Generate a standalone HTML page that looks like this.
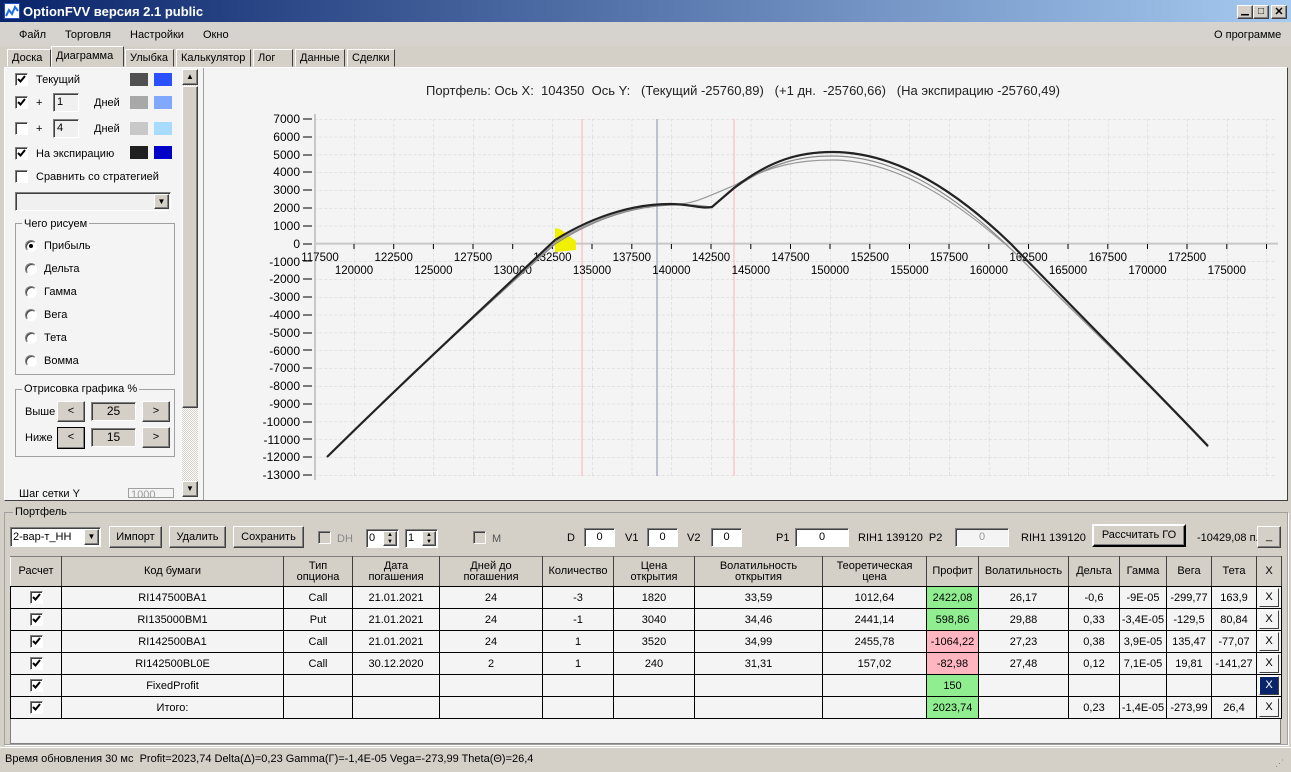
<!DOCTYPE html>
<html><head><meta charset="utf-8"><style>
*{margin:0;padding:0;box-sizing:border-box}
body{width:1291px;height:772px;overflow:hidden;background:#d4d0c8;font-family:"Liberation Sans",sans-serif;font-size:11px;color:#000;position:relative}
.a{position:absolute}
.btn{position:absolute;background:#d4d0c8;border:1px solid;border-color:#fff #404040 #404040 #fff;box-shadow:inset -1px -1px #808080;text-align:center;font-size:11px}
.inp{position:absolute;background:#fff;border:1px solid;border-color:#808080 #fff #fff #808080;box-shadow:inset 1px 1px #404040;text-align:center;font-size:11px}
.cb{position:absolute;width:13px;height:13px;background:#fff;border:1px solid;border-color:#808080 #fff #fff #808080;box-shadow:inset 1px 1px #404040}
.cb svg{position:absolute;left:1px;top:1px}
.rb{position:absolute;width:12px;height:12px;border-radius:50%;background:#fff;border:1px solid;border-color:#808080 #fff #fff #808080;box-shadow:inset 1px 1px #404040}
.rb.on::after{content:"";position:absolute;left:3px;top:3px;width:4px;height:4px;border-radius:50%;background:#000}
.tab{position:absolute;top:49px;height:18px;background:#d4d0c8;border:1px solid;border-color:#fff #404040 transparent #fff;padding:2px 4px;font-size:11px}
table{border-collapse:collapse;position:absolute;left:10px;top:556px;table-layout:fixed;font-size:11px}
td{border:1px solid #000;text-align:center;height:22px;background:#f4f4f4;padding:0;overflow:hidden;white-space:nowrap}
tr.h td{background:#d4d0c8;height:30px;line-height:11px;border-color:#808080 #404040 #000 #fff}
.g{background:#90ee90!important}.r{background:#ffb6c1!important}
.x{display:inline-block;width:20px;height:19px;border:1px solid;border-color:#fff #404040 #404040 #fff;background:#f4f4f4;line-height:17px}
td .cb{position:relative;display:inline-block;vertical-align:middle}
</style></head><body>
<!-- title bar -->
<div class="a" style="left:0;top:0;width:1291px;height:22px;background:linear-gradient(90deg,#0a246a,#a6caf0)"></div>
<div class="a" style="left:4px;top:3px;width:16px;height:16px;background:#fff;border:1px solid #2050c0"><svg width="14" height="14"><path d="M1 12 L4 6 L7 10 L10 3 L13 7" stroke="#1e6ee8" stroke-width="2" fill="none"/></svg></div>
<div class="a" style="left:23px;top:4px;color:#fff;font-weight:bold;font-size:13px">OptionFVV версия 2.1 public</div>
<div class="btn" style="left:1237px;top:5px;width:16px;height:14px;font-size:10px;line-height:10px">▁</div>
<div class="btn" style="left:1253px;top:5px;width:16px;height:14px;font-size:10px;line-height:12px">□</div>
<div class="btn" style="left:1271px;top:5px;width:16px;height:14px;font-size:11px;line-height:12px;font-weight:bold">✕</div>
<!-- menu -->
<div class="a" style="left:0;top:22px;width:1291px;height:24px;background:#d6d3ce"></div>
<div class="a" style="left:19px;top:29px;font-size:11px">Файл</div>
<div class="a" style="left:65px;top:29px">Торговля</div>
<div class="a" style="left:130px;top:29px">Настройки</div>
<div class="a" style="left:203px;top:29px">Окно</div>
<div class="a" style="left:1214px;top:29px">О программе</div>
<!-- tabs -->
<div class="tab" style="left:7px;width:44px">Доска</div>
<div class="tab" style="left:51px;top:46px;height:21px;width:73px;padding-top:3px">Диаграмма</div>
<div class="tab" style="left:125px;width:49px">Улыбка</div>
<div class="tab" style="left:176px;width:75px">Калькулятор</div>
<div class="tab" style="left:253px;width:40px">Лог</div>
<div class="tab" style="left:295px;width:50px">Данные</div>
<div class="tab" style="left:347px;width:48px">Сделки</div>
<!-- main area -->
<div class="a" style="left:4px;top:67px;width:1284px;height:434px;border:1px solid;border-color:#fff #404040 #404040 #fff;background:#f4f4f4"></div>
<div class="a" style="left:5px;top:68px;width:199px;height:432px;background:#f4f4f4;border-right:1px solid #a0a0a0"></div>
<!-- left panel -->
<div class="cb" style="left:15px;top:73px"><svg width="9" height="9"><path d="M1 4l2.5 2.5L8 1" stroke="#000" stroke-width="2" fill="none"/></svg></div><div class="a" style="left:36px;top:74px">Текущий</div>
<div class="a" style="left:130px;top:73px;width:18px;height:13px;background:#505050"></div><div class="a" style="left:154px;top:73px;width:18px;height:13px;background:#2a50ff"></div>
<div class="cb" style="left:15px;top:96px"><svg width="9" height="9"><path d="M1 4l2.5 2.5L8 1" stroke="#000" stroke-width="2" fill="none"/></svg></div><div class="a" style="left:36px;top:97px">+</div>
<div class="inp" style="left:53px;top:93px;width:26px;height:19px;text-align:left;padding-left:3px;line-height:17px;background:#f0f0f0">1</div>
<div class="a" style="left:94px;top:97px">Дней</div>
<div class="a" style="left:130px;top:96px;width:18px;height:13px;background:#a8a8a8"></div><div class="a" style="left:154px;top:96px;width:18px;height:13px;background:#80a8ff"></div>
<div class="cb" style="left:15px;top:122px"></div><div class="a" style="left:36px;top:123px">+</div>
<div class="inp" style="left:53px;top:119px;width:26px;height:19px;text-align:left;padding-left:3px;line-height:17px;background:#f0f0f0">4</div>
<div class="a" style="left:94px;top:123px">Дней</div>
<div class="a" style="left:130px;top:122px;width:18px;height:13px;background:#c8c8c8"></div><div class="a" style="left:154px;top:122px;width:18px;height:13px;background:#a8dcff"></div>
<div class="cb" style="left:15px;top:147px"><svg width="9" height="9"><path d="M1 4l2.5 2.5L8 1" stroke="#000" stroke-width="2" fill="none"/></svg></div><div class="a" style="left:36px;top:148px">На экспирацию</div>
<div class="a" style="left:130px;top:146px;width:18px;height:13px;background:#202020"></div><div class="a" style="left:154px;top:146px;width:18px;height:13px;background:#0000c8"></div>
<div class="cb" style="left:15px;top:170px"></div><div class="a" style="left:36px;top:171px">Сравнить со стратегией</div>
<div class="inp" style="left:15px;top:192px;width:156px;height:19px;background:#f0f0f0"></div>
<div class="btn" style="left:154px;top:194px;width:15px;height:15px;font-size:8px;line-height:13px">▼</div>
<div class="a" style="left:15px;top:223px;width:160px;height:152px;border:1px solid #a0a0a0"></div>
<div class="a" style="left:22px;top:218px;background:#f4f4f4;padding:0 2px">Чего рисуем</div>
<div class="rb on" style="left:25px;top:240px"></div><div class="a" style="left:44px;top:240px">Прибыль</div>
<div class="rb" style="left:25px;top:263px"></div><div class="a" style="left:44px;top:263px">Дельта</div>
<div class="rb" style="left:25px;top:286px"></div><div class="a" style="left:44px;top:286px">Гамма</div>
<div class="rb" style="left:25px;top:309px"></div><div class="a" style="left:44px;top:309px">Вега</div>
<div class="rb" style="left:25px;top:332px"></div><div class="a" style="left:44px;top:332px">Тета</div>
<div class="rb" style="left:25px;top:355px"></div><div class="a" style="left:44px;top:355px">Вомма</div>
<div class="a" style="left:15px;top:389px;width:160px;height:68px;border:1px solid #a0a0a0"></div>
<div class="a" style="left:22px;top:383px;background:#f4f4f4;padding:0 2px">Отрисовка графика %</div>
<div class="a" style="left:25px;top:406px">Выше</div>
<div class="btn" style="left:57px;top:401px;width:28px;height:21px;line-height:19px">&lt;</div>
<div class="inp" style="left:91px;top:402px;width:45px;height:19px;background:#d4d0c8;line-height:17px;font-size:12px">25</div>
<div class="btn" style="left:142px;top:401px;width:28px;height:21px;line-height:19px">&gt;</div>
<div class="a" style="left:25px;top:432px">Ниже</div>
<div class="btn" style="left:57px;top:427px;width:28px;height:22px;line-height:19px;border-color:#000">&lt;</div>
<div class="inp" style="left:91px;top:428px;width:45px;height:19px;background:#d4d0c8;line-height:17px;font-size:12px">15</div>
<div class="btn" style="left:142px;top:427px;width:28px;height:21px;line-height:19px">&gt;</div>
<div class="a" style="left:19px;top:488px;height:10px;overflow:hidden">Шаг сетки Y</div>
<div class="a" style="left:128px;top:488px;width:46px;height:10px;overflow:hidden;border:1px solid #a0a0a0;color:#999;padding-left:2px">1000</div>
<!-- scrollbar -->
<div class="a" style="left:182px;top:69px;width:16px;height:428px;background:repeating-conic-gradient(#d4d0c8 0 25%,#fff 0 50%) 0 0/2px 2px"></div>
<div class="btn" style="left:182px;top:69px;width:16px;height:16px;font-size:8px;line-height:14px">▲</div>
<div class="btn" style="left:182px;top:86px;width:16px;height:322px"></div>
<div class="btn" style="left:182px;top:481px;width:16px;height:16px;font-size:8px;line-height:14px">▼</div>
<!-- chart -->
<svg class="a" style="left:0;top:0" width="1291" height="500" font-family="Liberation Sans, sans-serif" font-size="12">
<defs><pattern id="gr" patternUnits="userSpaceOnUse" x="314.3" y="119" width="39.68" height="17.8">
<path d="M0 0V17.8" stroke="#d0d0d0" stroke-dasharray="3,2" fill="none"/><path d="M0 0H39.68" stroke="#d0d0d0" stroke-dasharray="3,2" fill="none"/></pattern></defs>
<text x="743" y="95" text-anchor="middle" font-size="13" fill="#222" xml:space="preserve">Портфель: Ось X:  104350  Ось Y:   (Текущий -25760,89)   (+1 дн.  -25760,66)   (На экспирацию -25760,49)</text>
<rect x="316" y="119" width="960" height="357" fill="url(#gr)"/>
<line x1="315" y1="114" x2="315" y2="480" stroke="#c8c8c8" stroke-width="2"/>
<line x1="315" y1="243.6" x2="1278" y2="243.6" stroke="#c8c8c8" stroke-width="2"/>
<line x1="582" y1="119" x2="582" y2="476" stroke="#ffb0b8"/>
<line x1="734" y1="119" x2="734" y2="476" stroke="#ffb0b8"/>
<line x1="657" y1="119" x2="657" y2="476" stroke="#a8b0c0" stroke-width="1.5"/>
<g fill="#000" text-anchor="end">
<text x="300" y="123">7000</text><text x="300" y="141">6000</text><text x="300" y="159">5000</text><text x="300" y="176">4000</text><text x="300" y="194">3000</text><text x="300" y="212">2000</text><text x="300" y="230">1000</text><text x="300" y="248">0</text><text x="300" y="266">-1000</text><text x="300" y="283">-2000</text><text x="300" y="301">-3000</text><text x="300" y="319">-4000</text><text x="300" y="337">-5000</text><text x="300" y="355">-6000</text><text x="300" y="372">-7000</text><text x="300" y="390">-8000</text><text x="300" y="408">-9000</text><text x="300" y="426">-10000</text><text x="300" y="444">-11000</text><text x="300" y="461">-12000</text><text x="300" y="479">-13000</text>
</g>
<path d="M303 119h9M303 137h9M303 155h9M303 172h9M303 190h9M303 208h9M303 226h9M303 244h9M303 261h9M303 279h9M303 297h9M303 315h9M303 333h9M303 350h9M303 368h9M303 386h9M303 404h9M303 422h9M303 439h9M303 457h9M303 475h9" stroke="#000"/>
<path d="M354 244v5M393.7 244v5M433.4 244v5M473 244v5M512.7 244v5M552.4 244v5M592 244v5M631.8 244v5M671.4 244v5M711 244v5M750.8 244v5M790.5 244v5M830 244v5M869.8 244v5M909.5 244v5M949 244v5M988.8 244v5M1028.5 244v5M1068 244v5M1107.8 244v5M1147.5 244v5M1187 244v5M1226.8 244v5M1266.5 244v5" stroke="#000"/>
<g fill="#000" text-anchor="middle" font-size="11.5">
<text x="320" y="261">117500</text><text x="393.7" y="261">122500</text><text x="473" y="261">127500</text><text x="552.4" y="261">132500</text><text x="631.8" y="261">137500</text><text x="711" y="261">142500</text><text x="790.5" y="261">147500</text><text x="869.8" y="261">152500</text><text x="949" y="261">157500</text><text x="1028.5" y="261">162500</text><text x="1107.8" y="261">167500</text><text x="1187" y="261">172500</text>
<text x="354" y="274">120000</text><text x="433.4" y="274">125000</text><text x="512.7" y="274">130000</text><text x="592" y="274">135000</text><text x="671.4" y="274">140000</text><text x="750.8" y="274">145000</text><text x="830" y="274">150000</text><text x="909.5" y="274">155000</text><text x="988.8" y="274">160000</text><text x="1068" y="274">165000</text><text x="1147.5" y="274">170000</text><text x="1226.8" y="274">175000</text>
</g>
<polygon points="555,228 560,229 576,241 576,250 555,252" fill="#f0f000"/>
<path d="M327 457 C400 385 470 320 555 244 C600 215 640 206 672 205 C695 204 700 206 712 207 L735 188 C770 163 800 156 832 156 C900 156 960 200 1010 248 C1080 318 1150 385 1208 447" stroke="#888" stroke-width="1.2" fill="none"/>
<path d="M327 457 C400 385 470 320 555 242 C600 215 640 204 672 204 C690 205 700 200 735 185 C770 165 800 160 832 160 C900 160 960 205 1012 250 C1080 318 1150 385 1208 447" stroke="#999" stroke-width="1.2" fill="none"/>
<path d="M327 457 C400 385 470 320 555 240 C600 212 640 204 670 204 C690 204 700 209 712 207 L734 188 C770 160 800 152 832 152 C900 152 960 195 1010 243 C1080 315 1150 385 1208 446" stroke="#222" stroke-width="2.2" fill="none"/>
</svg>
<!-- portfolio -->
<div class="a" style="left:4px;top:512px;width:1284px;height:233px;border:1px solid #a0a0a0;box-shadow:1px 1px #fff"></div>
<div class="a" style="left:13px;top:506px;background:#d4d0c8;padding:0 2px">Портфель</div>
<div class="inp" style="left:10px;top:527px;width:91px;height:20px;text-align:left;padding-left:2px;line-height:18px">2-вар-т_НН</div>
<div class="btn" style="left:84px;top:529px;width:15px;height:16px;font-size:8px;line-height:14px">▼</div>
<div class="btn" style="left:109px;top:526px;width:53px;height:22px;line-height:20px">Импорт</div>
<div class="btn" style="left:169px;top:526px;width:57px;height:22px;line-height:20px">Удалить</div>
<div class="btn" style="left:233px;top:526px;width:71px;height:22px;line-height:20px">Сохранить</div>
<div class="cb" style="left:318px;top:531px;background:#d4d0c8"></div><div class="a" style="left:337px;top:533px;color:#888">DH</div>
<div class="inp" style="left:366px;top:529px;width:33px;height:19px;text-align:left;padding-left:2px;line-height:17px">0</div>
<div class="btn" style="left:383px;top:531px;width:14px;height:15px;font-size:6px;line-height:7px">▲<br>▼</div>
<div class="inp" style="left:405px;top:529px;width:33px;height:19px;text-align:left;padding-left:2px;line-height:17px">1</div>
<div class="btn" style="left:422px;top:531px;width:14px;height:15px;font-size:6px;line-height:7px">▲<br>▼</div>
<div class="cb" style="left:473px;top:531px;background:#d4d0c8"></div><div class="a" style="left:492px;top:533px;color:#555">M</div>
<div class="a" style="left:567px;top:532px">D</div><div class="inp" style="left:584px;top:528px;width:31px;height:19px;line-height:17px">0</div>
<div class="a" style="left:625px;top:532px">V1</div><div class="inp" style="left:647px;top:528px;width:31px;height:19px;line-height:17px">0</div>
<div class="a" style="left:687px;top:532px">V2</div><div class="inp" style="left:711px;top:528px;width:31px;height:19px;line-height:17px">0</div>
<div class="a" style="left:776px;top:532px">P1</div><div class="inp" style="left:795px;top:528px;width:54px;height:19px;line-height:17px">0</div>
<div class="a" style="left:858px;top:532px">RIH1 139120&nbsp; P2</div>
<div class="inp" style="left:955px;top:528px;width:54px;height:19px;line-height:17px;color:#999;background:#f4f4f4">0</div>
<div class="a" style="left:1021px;top:532px">RIH1 139120</div>
<div class="btn" style="left:1092px;top:524px;width:94px;height:23px;line-height:19px;border:2px solid;border-color:#fff #000 #000 #fff">Рассчитать ГО</div>
<div class="a" style="left:1197px;top:532px">-10429,08 п.</div>
<div class="btn" style="left:1257px;top:526px;width:24px;height:22px;line-height:18px">_</div>
<div class="a" style="left:10px;top:556px;width:1271px;height:188px;background:#f4f4f4;border:1px solid #808080"></div>
<table>
<colgroup><col style="width:51px"><col style="width:222px"><col style="width:69px"><col style="width:87px"><col style="width:103px"><col style="width:71px"><col style="width:81px"><col style="width:128px"><col style="width:104px"><col style="width:52px"><col style="width:90px"><col style="width:51px"><col style="width:47px"><col style="width:45px"><col style="width:45px"><col style="width:25px"></colgroup>
<tr class="h"><td>Расчет</td><td>Код бумаги</td><td>Тип<br>опциона</td><td>Дата<br>погашения</td><td>Дней до<br>погашения</td><td>Количество</td><td>Цена<br>открытия</td><td>Волатильность<br>открытия</td><td>Теоретическая<br>цена</td><td>Профит</td><td>Волатильность</td><td>Дельта</td><td>Гамма</td><td>Вега</td><td>Тета</td><td>X</td></tr>
<tr><td><span class="cb"><svg width="9" height="9"><path d="M1 4l2.5 2.5L8 1" stroke="#000" stroke-width="2" fill="none"/></svg></span></td><td>RI147500BA1</td><td>Call</td><td>21.01.2021</td><td>24</td><td>-3</td><td>1820</td><td>33,59</td><td>1012,64</td><td class="g">2422,08</td><td>26,17</td><td>-0,6</td><td>-9E-05</td><td>-299,77</td><td>163,9</td><td><span class="x">X</span></td></tr>
<tr><td><span class="cb"><svg width="9" height="9"><path d="M1 4l2.5 2.5L8 1" stroke="#000" stroke-width="2" fill="none"/></svg></span></td><td>RI135000BM1</td><td>Put</td><td>21.01.2021</td><td>24</td><td>-1</td><td>3040</td><td>34,46</td><td>2441,14</td><td class="g">598,86</td><td>29,88</td><td>0,33</td><td>-3,4E-05</td><td>-129,5</td><td>80,84</td><td><span class="x">X</span></td></tr>
<tr><td><span class="cb"><svg width="9" height="9"><path d="M1 4l2.5 2.5L8 1" stroke="#000" stroke-width="2" fill="none"/></svg></span></td><td>RI142500BA1</td><td>Call</td><td>21.01.2021</td><td>24</td><td>1</td><td>3520</td><td>34,99</td><td>2455,78</td><td class="r">-1064,22</td><td>27,23</td><td>0,38</td><td>3,9E-05</td><td>135,47</td><td>-77,07</td><td><span class="x">X</span></td></tr>
<tr><td><span class="cb"><svg width="9" height="9"><path d="M1 4l2.5 2.5L8 1" stroke="#000" stroke-width="2" fill="none"/></svg></span></td><td>RI142500BL0E</td><td>Call</td><td>30.12.2020</td><td>2</td><td>1</td><td>240</td><td>31,31</td><td>157,02</td><td class="r">-82,98</td><td>27,48</td><td>0,12</td><td>7,1E-05</td><td>19,81</td><td>-141,27</td><td><span class="x">X</span></td></tr>
<tr><td><span class="cb"><svg width="9" height="9"><path d="M1 4l2.5 2.5L8 1" stroke="#000" stroke-width="2" fill="none"/></svg></span></td><td>FixedProfit</td><td></td><td></td><td></td><td></td><td></td><td></td><td></td><td class="g">150</td><td></td><td></td><td></td><td></td><td></td><td><span class="x" style="background:#0a246a;color:#fff">X</span></td></tr>
<tr><td><span class="cb"><svg width="9" height="9"><path d="M1 4l2.5 2.5L8 1" stroke="#000" stroke-width="2" fill="none"/></svg></span></td><td>Итого:</td><td></td><td></td><td></td><td></td><td></td><td></td><td></td><td class="g">2023,74</td><td></td><td>0,23</td><td>-1,4E-05</td><td>-273,99</td><td>26,4</td><td><span class="x">X</span></td></tr>
</table>
<!-- status -->
<div class="a" style="left:0;top:747px;width:1291px;height:25px;background:#d4d0c8;border-top:1px solid #fff"></div>
<div class="a" style="left:5px;top:753px">Время обновления 30 мс&nbsp; Profit=2023,74 Delta(Δ)=0,23 Gamma(Γ)=-1,4E-05 Vega=-273,99 Theta(Θ)=26,4</div>
<div class="a" style="left:1275px;top:758px;color:#888;font-size:9px">⋰</div>
</body></html>
